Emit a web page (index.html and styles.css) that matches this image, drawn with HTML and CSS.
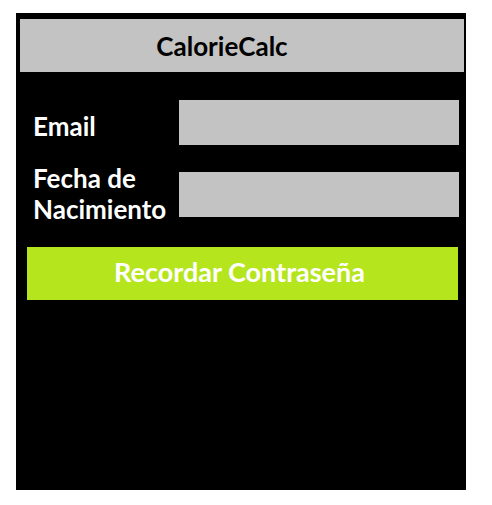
FILE: index.html
```html
<!DOCTYPE html>
<html lang="es">
<head>
<meta charset="utf-8">
<title>CalorieCalc</title>
<link rel="stylesheet" href="styles.css">
</head>
<body>
<div class="panel">
  <header class="title-bar">CalorieCalc</header>
  <form class="form">
    <div class="row row-email">
      <label class="label">Email</label>
      <div class="field"></div>
    </div>
    <div class="row row-date">
      <label class="label">Fecha de<br>Nacimiento</label>
      <div class="field"></div>
    </div>
    <button type="button" class="btn">Recordar Contraseña</button>
  </form>
</div>
</body>
</html>
```
FILE: styles.css
```css
html, body {
  margin: 0;
  padding: 0;
  background: #ffffff;
}
body {
  font-family: Lato, "Open Sans", sans-serif;
  font-weight: 700;
}
.panel {
  margin: 13px 0 0 16px;
  width: 450px;
  height: 477px;
  background: #000000;
  padding: 6px 2px 0 4px;
  box-sizing: border-box;
  display: flex;
  flex-direction: column;
}
.title-bar {
  height: 53px;
  background: #c3c3c3;
  color: #000000;
  font-size: 26px;
  display: flex;
  align-items: center;
  justify-content: center;
  padding-right: 40px;
}
.form {
  display: flex;
  flex-direction: column;
  padding-top: 28px;
}
.row {
  display: flex;
  align-items: center;
  height: 45px;
}
.row-date {
  margin-top: 27px;
}
.label {
  width: 146px;
  padding-left: 13px;
  color: #ffffff;
  font-size: 26px;
  line-height: 31px;
  flex-shrink: 0;
}
.row-email .label {
  margin-top: 7px;
}
.row-date .label {
  margin-top: -2px;
}
.field {
  width: 280px;
  height: 45px;
  background: #c3c3c3;
}
.btn {
  margin: 30px 0 0 7px;
  width: 431px;
  height: 53px;
  border: 0;
  padding: 0 6px 0 0;
  background: #b5e61d;
  color: #ffffff;
  font-family: inherit;
  font-weight: 700;
  font-size: 27px;
  line-height: 1;
  padding-bottom: 4px;
}
```
